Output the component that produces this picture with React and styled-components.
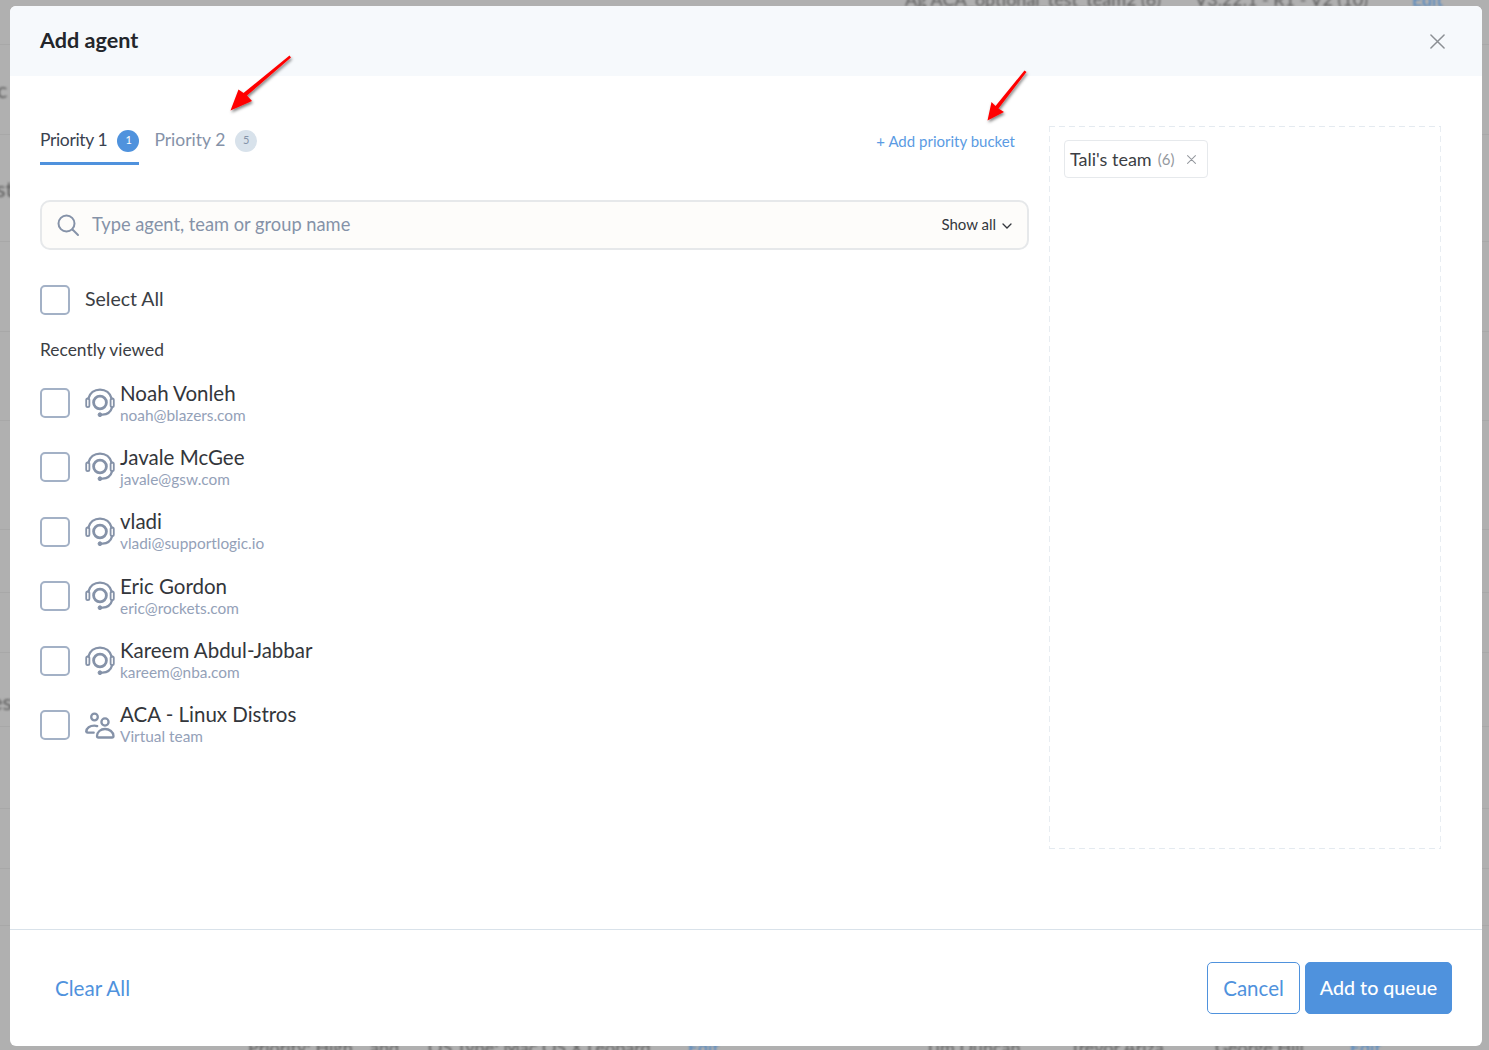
import React from "react";
import styled, { createGlobalStyle } from "styled-components";

const Global = createGlobalStyle`
  html, body { margin: 0; padding: 0; background: #b0b0b0; }
  body { font-family: "Lato", "Noto Sans", sans-serif; color: #2b2e33; }
`;

const Backdrop = styled.div`
  position: relative;
  width: 1489px;
  height: 1050px;
  overflow: hidden;
  background: #b0b0b0;
  box-sizing: border-box;
  padding: 6px 7px 4px 10px;
`;
const Peek = styled.div`
  position: absolute;
  left: ${(p) => p.$x}px;
  top: ${(p) => p.$y}px;
  font-size: ${(p) => p.$size || 18}px;
  white-space: nowrap;
  color: ${(p) => (p.$blue ? "#4a85c4" : "#5e5e5e")};
  filter: blur(0.8px);
`;
const BackRule = styled.div`
  position: absolute;
  left: 0;
  right: 0;
  top: ${(p) => p.$y}px;
  height: 1px;
  background: #a8a8a8;
`;
const Modal = styled.div`
  position: relative;
  z-index: 1;
  height: 100%;
  background: #fff;
  border-radius: 6px;
  display: flex;
  flex-direction: column;
  overflow: hidden;
`;
const Header = styled.header`
  flex: 0 0 70px;
  background: #f6f9fc;
  display: flex;
  align-items: center;
  justify-content: space-between;
  padding: 0 37px 0 30px;
`;
const Title = styled.h1`
  margin: 0 0 2px;
  font-size: 21.6px;
  font-weight: 700;
  color: #23262b;
`;
const CloseBtn = styled.button`
  border: 0;
  background: none;
  padding: 0;
  display: flex;
  color: #8b8f94;
`;
const Body = styled.main`
  flex: 1;
  display: flex;
  padding: 50px 41px 0 30px;
  gap: 20px;
`;
const LeftCol = styled.section`
  width: 989px;
  display: flex;
  flex-direction: column;
`;
const TabBar = styled.div`
  display: flex;
  justify-content: space-between;
  height: 39px;
  padding-right: 14px;
  margin-top: 4px;
`;
const Tabs = styled.div`
  display: flex;
  gap: 15px;
`;
const Tab = styled.div`
  display: flex;
  align-items: flex-start;
  gap: 10px;
  height: 35px;
  box-sizing: border-box;
  border-bottom: ${(p) => (p.$active ? "3px solid #4f92dd" : "0")};
  font-size: 17.5px;
  line-height: 22px;
  letter-spacing: ${(p) => (p.$active ? "-0.35px" : "0")};
  color: ${(p) => (p.$active ? "#3a4250" : "#8592a8")};
`;
const TabLabel = styled.span`
  margin-top: -1px;
`;
const TabBadge = styled.span`
  width: 22px;
  height: 22px;
  border-radius: 50%;
  background: ${(p) => (p.$active ? "#4f92dd" : "#d8e2eb")};
  color: ${(p) => (p.$active ? "#fff" : "#8592a8")};
  font-size: 11px;
  display: flex;
  align-items: center;
  justify-content: center;
  padding-bottom: 3px;
  box-sizing: border-box;
`;
const AddBucket = styled.a`
  color: #5b9be3;
  font-size: 15px;
  line-height: 22px;
`;
const SearchBox = styled.div`
  margin-top: 31px;
  height: 50px;
  box-sizing: border-box;
  border: 2px solid #e6e8ea;
  border-radius: 10px;
  background: #fdfcfa;
  display: flex;
  align-items: center;
  padding: 0 15px 0 14px;
  gap: 12px;
  color: #8592a8;
`;
const Placeholder = styled.span`
  flex: 1;
  font-size: 18.3px;
  padding-bottom: 2px;
  color: #8592a8;
`;
const ShowAll = styled.span`
  display: flex;
  align-items: center;
  gap: 6px;
  font-size: 15px;
  padding-bottom: 2px;
  color: #33373d;
`;
const Chevron = styled.svg`
  margin-top: 3px;
`;
const Box = styled.span`
  flex: 0 0 30px;
  width: 30px;
  height: 30px;
  box-sizing: border-box;
  border: 2px solid #a3b1c6;
  border-radius: 5px;
  background: #fff;
`;
const SelectAllRow = styled.label`
  display: flex;
  align-items: center;
  gap: 15px;
  margin-top: 35px;
  font-size: 19.5px;
  color: #3b3e44;
`;
const SelectText = styled.span`
  padding-bottom: 3px;
`;
const SectionLabel = styled.div`
  margin-top: 24px;
  font-size: 17.4px;
  line-height: 22px;
  color: #3b3e44;
`;
const List = styled.div`
  margin-top: 16px;
  display: flex;
  flex-direction: column;
`;
const Row = styled.div`
  height: 64.4px;
  display: flex;
  gap: 15px;
  align-items: flex-start;
  padding-top: 11px;
  box-sizing: border-box;
`;
const Glyph = styled.span`
  flex: 0 0 30px;
  margin-right: -10px;
  display: flex;
  color: #8592a8;
`;
const Who = styled.div`
  margin-top: -8.5px;
`;
const Name = styled.div`
  font-size: 20.5px;
  line-height: 26px;
  color: #33363b;
`;
const Sub = styled.div`
  font-size: 15.4px;
  line-height: 18px;
  color: #94a1b8;
`;
const Drop = styled.aside`
  width: 392px;
  height: 723px;
  box-sizing: border-box;
  padding: 14px 15px;
  align-self: flex-start;
  background:
    repeating-linear-gradient(90deg, #e4eaf0 0 6px, transparent 6px 10px) top left / 100% 1px no-repeat,
    repeating-linear-gradient(90deg, #e4eaf0 0 6px, transparent 6px 10px) bottom left / 100% 1px no-repeat,
    repeating-linear-gradient(180deg, #e8edf2 0 6px, transparent 6px 10px) top left / 1px 100% no-repeat,
    repeating-linear-gradient(180deg, #e8edf2 0 6px, transparent 6px 10px) top right / 1px 100% no-repeat;
`;
const Chip = styled.div`
  display: inline-flex;
  align-items: center;
  height: 38px;
  box-sizing: border-box;
  border: 1px solid #e6e9ec;
  border-radius: 4px;
  padding: 0 11px 0 5px;
  gap: 6px;
  font-size: 18px;
  color: #3b3e44;
`;
const Count = styled.span`
  font-size: 15px;
  color: #94989e;
`;
const ChipX = styled.span`
  display: flex;
  margin-left: 7px;
  color: #94989e;
`;
const Footer = styled.footer`
  flex: 0 0 117px;
  box-sizing: border-box;
  border-top: 1px solid #d9e2ea;
  display: flex;
  align-items: center;
  justify-content: space-between;
  padding: 0 30px 1px 45px;
`;
const ClearAll = styled.a`
  color: #4f92dd;
  font-size: 20.6px;
`;
const Buttons = styled.div`
  display: flex;
  gap: 5px;
`;
const Button = styled.button`
  height: 52px;
  width: ${(p) => p.$w}px;
  border-radius: 5px;
  border: 1px solid #4f92dd;
  background: ${(p) => (p.$primary ? "#4f92dd" : "#fff")};
  color: ${(p) => (p.$primary ? "#fff" : "#4f92dd")};
  font-family: "Lato", sans-serif;
  font-weight: ${(p) => (p.$primary ? 500 : 400)};
  font-size: ${(p) => (p.$primary ? 19.7 : 20.5)}px;
  padding: 0;
`;
const ArrowSvg = styled.svg`
  position: absolute;
  left: 0;
  top: 0;
  pointer-events: none;
  z-index: 2;
`;

const Headset = () => (
  <svg width="30" height="30" viewBox="0 0 30 30" fill="none" stroke="currentColor" strokeWidth="2.3" strokeLinecap="round">
    <circle cx="15" cy="14.5" r="6.4" strokeWidth="2.8" />
    <path d="M3.4 10.5C4.8 5 9.4 1.6 15 1.6S25.2 5 26.6 10.5" />
    <path d="M27 19.5c-1.2 4.4-4.8 7-9.5 7.2" />
    <rect x="1.2" y="10.5" width="3.2" height="8.6" rx="1.6" strokeWidth="1.8" />
    <rect x="25.6" y="10.5" width="3.2" height="8.6" rx="1.6" strokeWidth="1.8" />
    <circle cx="15" cy="26.7" r="1.9" fill="currentColor" strokeWidth="1" />
  </svg>
);
const Team = () => (
  <svg width="30" height="30" viewBox="0 0 30 30" fill="none" stroke="currentColor" strokeWidth="2.3" strokeLinecap="round" strokeLinejoin="round">
    <circle cx="9.5" cy="7" r="3.3" />
    <circle cx="20" cy="12" r="3.6" />
    <path d="M1.4 21.5c0-3.6 3.4-5.8 8-5.8 1 0 2 .1 2.8.4" />
    <path d="M1.4 21.5c0 .8.5 1.2 1.3 1.2h6" />
    <path d="M12 26c0-4 3.6-7 8-7s8.5 3 8.5 7c0 1-.6 1.5-1.5 1.5H13.5c-.9 0-1.5-.5-1.5-1.5z" />
  </svg>
);
const X = ({ s, w }) => (
  <svg width={s} height={s} viewBox="0 0 16 16" stroke="currentColor" strokeWidth={w} strokeLinecap="round">
    <path d="M1 1l14 14M15 1L1 15" />
  </svg>
);

const people = [
  ["Noah Vonleh", "noah@blazers.com"],
  ["Javale McGee", "javale@gsw.com"],
  ["vladi", "vladi@supportlogic.io"],
  ["Eric Gordon", "eric@rockets.com"],
  ["Kareem Abdul-Jabbar", "kareem@nba.com"],
  ["ACA - Linux Distros", "Virtual team", true],
];
const backRules = [44, 134, 241, 331, 420, 529, 592, 652, 726, 808, 868, 925];

export default function App() {
  return (
    <Backdrop>
      <Global />
      {backRules.map((y) => <BackRule key={y} $y={y} />)}
      <Peek $x={-3} $y={76} $size={22}>c</Peek>
      <Peek $x={-4} $y={175} $size={22}>st</Peek>
      <Peek $x={-9} $y={688} $size={22}>es</Peek>
      <Peek $x={905} $y={-12}>Ag ACA_optional_test_team2 (6)</Peek>
      <Peek $x={1195} $y={-12}>V3.22.1 - R1 - V2 (10)</Peek>
      <Peek $x={1412} $y={-12} $blue>Edit</Peek>
      <Peek $x={248} $y={1036}>Priority: High</Peek>
      <Peek $x={370} $y={1036}>and</Peek>
      <Peek $x={428} $y={1036}>OS Type: Mac OS X Leopard</Peek>
      <Peek $x={688} $y={1036} $blue>Edit</Peek>
      <Peek $x={925} $y={1036}>Tim Duncan</Peek>
      <Peek $x={1070} $y={1036}>Trevor Ariza</Peek>
      <Peek $x={1215} $y={1036}>George Hill</Peek>
      <Peek $x={1350} $y={1036} $blue>Edit</Peek>
      <Modal>
        <Header>
          <Title>Add agent</Title>
          <CloseBtn><X s={15} w={1.6} /></CloseBtn>
        </Header>
        <Body>
          <LeftCol>
            <TabBar>
              <Tabs>
                <Tab $active><TabLabel>Priority 1</TabLabel><TabBadge $active>1</TabBadge></Tab>
                <Tab><TabLabel>Priority 2</TabLabel><TabBadge>5</TabBadge></Tab>
              </Tabs>
              <AddBucket>+ Add priority bucket</AddBucket>
            </TabBar>
            <SearchBox>
              <svg width="24" height="24" viewBox="0 0 24 24" fill="none" stroke="currentColor" strokeWidth="2" strokeLinecap="round">
                <circle cx="10.5" cy="10.5" r="8" />
                <path d="M16.5 16.5L22 22" />
              </svg>
              <Placeholder>Type agent, team or group name</Placeholder>
              <ShowAll>
                Show all
                <Chevron width="10" height="6" viewBox="0 0 10 6" fill="none" stroke="currentColor" strokeWidth="1.3" strokeLinecap="round">
                  <path d="M1 1l4 4 4-4" />
                </Chevron>
              </ShowAll>
            </SearchBox>
            <SelectAllRow><Box /><SelectText>Select All</SelectText></SelectAllRow>
            <SectionLabel>Recently viewed</SectionLabel>
            <List>
              {people.map(([n, s, team]) => (
                <Row key={n}>
                  <Box />
                  <Glyph>{team ? <Team /> : <Headset />}</Glyph>
                  <Who>
                    <Name>{n}</Name>
                    <Sub>{s}</Sub>
                  </Who>
                </Row>
              ))}
            </List>
          </LeftCol>
          <Drop>
            <Chip>Tali's team <Count>(6)</Count><ChipX><X s={9} w={1.8} /></ChipX></Chip>
          </Drop>
        </Body>
        <Footer>
          <ClearAll>Clear All</ClearAll>
          <Buttons>
            <Button $w={93}>Cancel</Button>
            <Button $w={147} $primary>Add to queue</Button>
          </Buttons>
        </Footer>
        <ArrowSvg width="1472" height="140" viewBox="0 0 1472 140">
          <defs>
            <filter id="sh" x="-30%" y="-30%" width="160%" height="160%">
              <feDropShadow dx="1" dy="2" stdDeviation="1.5" floodColor="#000" floodOpacity="0.5" />
            </filter>
          </defs>
          <g fill="#f00" filter="url(#sh)">
            <path d="M279.5 49.5 L281 51.5 L237 89.5 L242 95 L220.5 104.5 L228.5 83.5 L233.5 87 Z" />
            <path d="M1014.5 64.5 L1016.5 66 L988.5 102.5 L994 106 L977.5 114.5 L981.5 96 L985.5 100 Z" />
          </g>
        </ArrowSvg>
      </Modal>
    </Backdrop>
  );
}
